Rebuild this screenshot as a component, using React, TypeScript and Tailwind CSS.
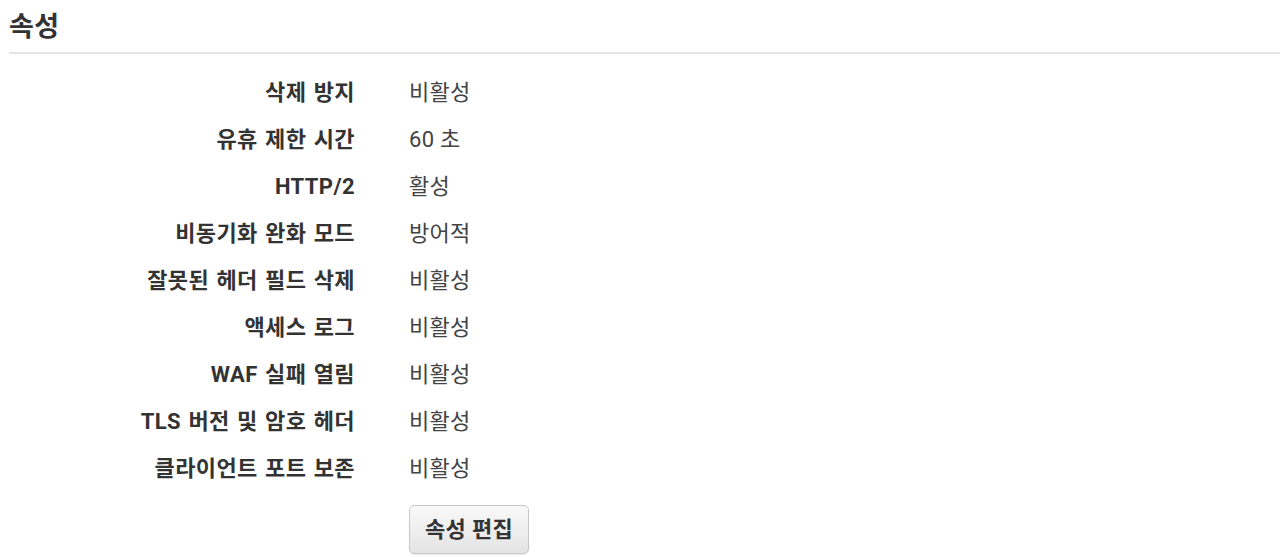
import React from "react";

const rows: [string, string][] = [
  ["삭제 방지", "비활성"],
  ["유휴 제한 시간", "60 초"],
  ["HTTP/2", "활성"],
  ["비동기화 완화 모드", "방어적"],
  ["잘못된 헤더 필드 삭제", "비활성"],
  ["액세스 로그", "비활성"],
  ["WAF 실패 열림", "비활성"],
  ["TLS 버전 및 암호 헤더", "비활성"],
  ["클라이언트 포트 보존", "비활성"],
];

export default function App() {
  return (
    <div
      className="w-[1280px] h-[557px] bg-white pl-[9px] overflow-hidden text-[#333]"
      style={{ fontFamily: 'Roboto, "Noto Sans CJK KR", sans-serif' }}
    >
      <div className="pt-[10px] h-[52px] text-[27px] font-bold leading-[34px] tracking-[0.3px]">속성</div>
      <div className="h-[2px] bg-[#e5e5e5]" />
      <div className="mt-[15px] grid grid-cols-[346px_1fr] gap-x-[54px]">
        {rows.map(([k, v]) => (
          <React.Fragment key={k}>
            <div className="h-[47px] flex items-center justify-end text-[22px] font-bold tracking-[0.4px] [word-spacing:1.5px]">
              {k}
            </div>
            <div className="h-[47px] flex items-center text-[22px] text-[#444] tracking-[0.3px]">{v}</div>
          </React.Fragment>
        ))}
        <div />
        <div className="pt-[13px]">
          <button className="w-[120px] h-[49px] rounded-[5px] border border-[#c8c8c8] bg-gradient-to-b from-[#f9f9f9] to-[#e4e4e4] text-[22px] font-bold text-[#333] tracking-[0.3px] shadow-[0_1px_1px_rgba(0,0,0,0.08)]">
            속성 편집
          </button>
        </div>
      </div>
    </div>
  );
}
